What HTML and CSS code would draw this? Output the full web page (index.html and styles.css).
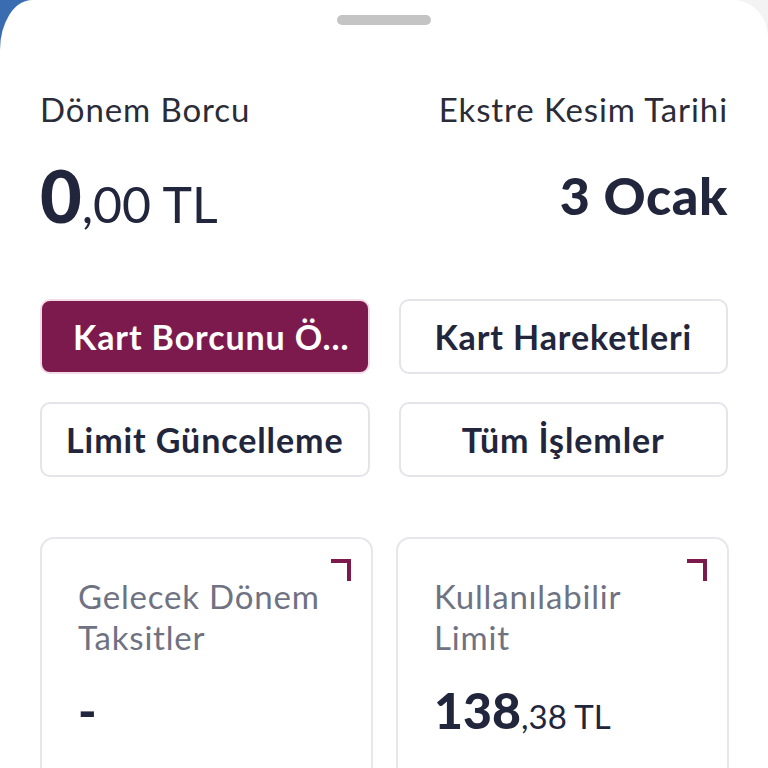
FILE: index.html
```html
<!DOCTYPE html>
<html lang="tr">
<head>
<meta charset="utf-8">
<link rel="stylesheet" href="styles.css">
</head>
<body>
<div class="sheet">
  <div class="handle"></div>
  <div class="summary">
    <div class="col">
      <div class="label">Dönem Borcu</div>
      <div class="amount"><span class="big">0</span><span class="rest">,00 TL</span></div>
    </div>
    <div class="col right">
      <div class="label">Ekstre Kesim Tarihi</div>
      <div class="date">3 Ocak</div>
    </div>
  </div>
  <div class="actions">
    <button class="btn primary"><span class="btn-text">Kart Borcunu Ö...</span></button>
    <button class="btn"><span class="btn-text">Kart Hareketleri</span></button>
    <button class="btn"><span class="btn-text">Limit Güncelleme</span></button>
    <button class="btn"><span class="btn-text">Tüm İşlemler</span></button>
  </div>
  <div class="cards">
    <div class="card">
      <svg class="corner" viewBox="0 0 22 22" width="22" height="22"><path d="M1 2H19V22" fill="none" stroke="#7c1a4e" stroke-width="4"/></svg>
      <div class="card-label">Gelecek Dönem Taksitler</div>
      <div class="card-value"><span class="v-big">-</span></div>
    </div>
    <div class="card">
      <svg class="corner" viewBox="0 0 22 22" width="22" height="22"><path d="M1 2H19V22" fill="none" stroke="#7c1a4e" stroke-width="4"/></svg>
      <div class="card-label">Kullanılabilir Limit</div>
      <div class="card-value"><span class="v-big">138</span><span class="v-rest">,38 TL</span></div>
    </div>
  </div>
</div>
</body>
</html>
```

FILE: styles.css
```css
* { box-sizing: border-box; }
html, body { margin: 0; height: 100%; }
body {
  background: linear-gradient(90deg, #3a6cb2 0%, #3a6cb2 8%, #f3f3f4 92%);
  font-family: "Lato", "Open Sans", sans-serif;
  color: #23263a;
  overflow: hidden;
}
.sheet {
  background: #fff;
  min-height: 100%;
  border-top-left-radius: 32px 50px;
  border-top-right-radius: 34px 38px;
  padding: 15px 40px 0 40px;
}
.handle {
  width: 94px;
  height: 10px;
  border-radius: 5px;
  background: #c4c4c4;
  margin: 0 auto;
}
.summary {
  display: flex;
  justify-content: space-between;
  margin-top: 64px;
}
.col { display: flex; flex-direction: column; }
.col.right { align-items: flex-end; }
.label {
  font-size: 33px;
  line-height: 40px;
  letter-spacing: 0.9px;
  color: #2a2c38;
}
.amount {
  margin-top: 31px;
  line-height: 70px;
  display: flex;
  align-items: baseline;
}
.big { font-size: 72px; font-weight: 900; color: #22263c; }
.rest { font-size: 50px; font-weight: 400; color: #22263c; }
.date {
  margin-top: 31px;
  line-height: 70px;
  font-size: 52px;
  font-weight: 900;
  letter-spacing: 0.6px;
  color: #22263c;
}
.actions {
  margin-top: 60px;
  display: grid;
  grid-template-columns: 1fr 1fr;
  gap: 28px 29px;
}
.btn {
  height: 75px;
  border: 2px solid #e4e4ea;
  border-radius: 10px;
  background: #fff;
  font-family: inherit;
  font-size: 34px;
  font-weight: 700;
  letter-spacing: 0.9px;
  color: #22263c;
  padding: 0 10px;
  display: flex;
  align-items: center;
  justify-content: center;
}
.btn-text {
  white-space: nowrap;
}
.btn.primary {
  background: #7c1a4e;
  border-color: #f3dbe6;
  color: #fff;
  justify-content: flex-start;
  padding-left: 31px;
}
.cards {
  margin-top: 60px;
  display: grid;
  grid-template-columns: 1fr 1fr;
  gap: 23px;
  margin-right: -1px;
}
.card {
  position: relative;
  height: 260px;
  border: 2px solid #e6e6ec;
  border-radius: 14px;
  padding: 37px 30px 0 36px;
}
.corner {
  position: absolute;
  top: 20px;
  right: 19px;
}
.card-label {
  font-size: 33px;
  line-height: 41px;
  letter-spacing: 0.8px;
  color: #6f7282;
}
.card-value {
  margin-top: 22px;
  line-height: 60px;
  display: flex;
  align-items: baseline;
}
.v-big { font-size: 50px; font-weight: 900; color: #22263c; }
.v-rest { font-size: 33px; color: #22263c; }
```
